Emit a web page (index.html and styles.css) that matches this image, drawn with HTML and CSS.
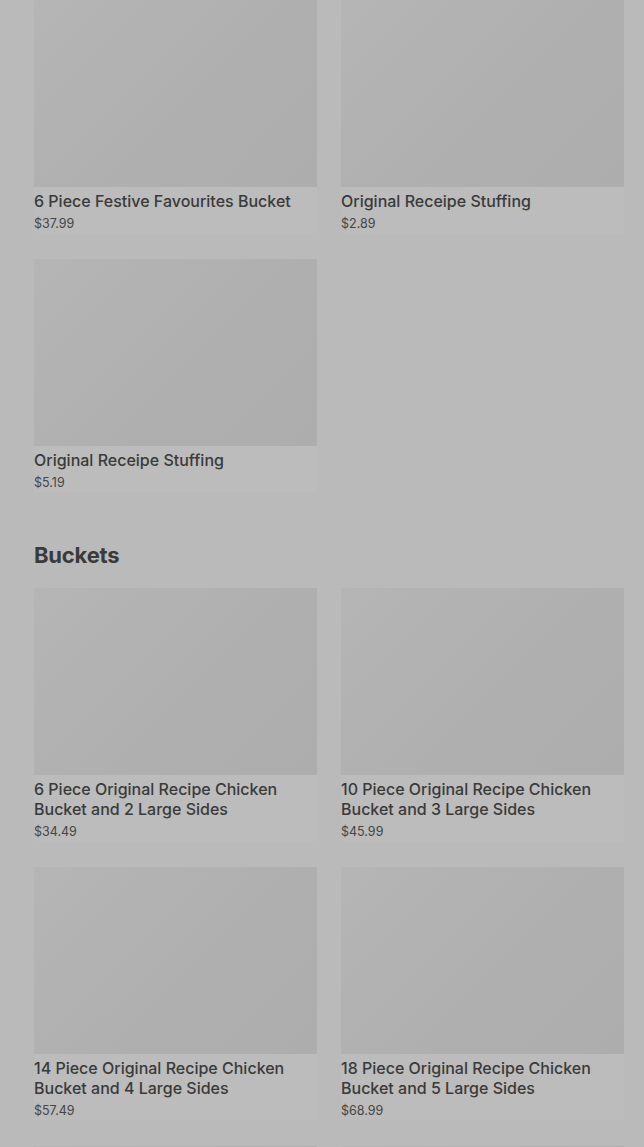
FILE: index.html
```html
<!DOCTYPE html>
<html lang="en">
  <head>
    <meta charset="UTF-8" />
    <meta name="viewport" content="width=device-width, initial-scale=1.0" />
    <title>Menu</title>
    <link rel="stylesheet" href="styles.css">
  </head>
  <body>
    <div class="menu">
      <section class="section">
        <div class="grid">
          <div class="card">
            <div class="thumb"></div>
            <h3>6 Piece Festive Favourites Bucket</h3>
            <p class="price">$37.99</p>
          </div>
          <div class="card">
            <div class="thumb"></div>
            <h3>Original Receipe Stuffing</h3>
            <p class="price">$2.89</p>
          </div>
          <div class="card">
            <div class="thumb"></div>
            <h3>Original Receipe Stuffing</h3>
            <p class="price">$5.19</p>
          </div>
        </div>
      </section>

      <section class="section">
        <h2>Buckets</h2>
        <div class="grid">
          <div class="card">
            <div class="thumb"></div>
            <h3>6 Piece Original Recipe Chicken Bucket and 2 Large Sides</h3>
            <p class="price">$34.49</p>
          </div>
          <div class="card">
            <div class="thumb"></div>
            <h3>10 Piece Original Recipe Chicken Bucket and 3 Large Sides</h3>
            <p class="price">$45.99</p>
          </div>
          <div class="card">
            <div class="thumb"></div>
            <h3>14 Piece Original Recipe Chicken Bucket and 4 Large Sides</h3>
            <p class="price">$57.49</p>
          </div>
          <div class="card">
            <div class="thumb"></div>
            <h3>18 Piece Original Recipe Chicken Bucket and 5 Large Sides</h3>
            <p class="price">$68.99</p>
          </div>
          <div class="card">
            <div class="thumb"></div>
          </div>
          <div class="card">
            <div class="thumb"></div>
          </div>
        </div>
      </section>
    </div>
  </body>
</html>
```
FILE: styles.css
```css
body {
  margin: 0;
  background-color: #bababa;
  font-family: Inter, "Noto Sans", sans-serif;
  color: #3a3a3a;
  overflow: hidden;
}
.menu {
  padding: 0 20px 0 34px;
}
.grid {
  display: grid;
  grid-template-columns: 1fr 1fr;
  column-gap: 24px;
}
.card {
  margin-bottom: 26px;
  background-color: #bcbcbc;
}
.thumb {
  height: 187px;
  background: linear-gradient(135deg, #b5b5b5, #afafaf 60%, #adadad);
}
h2 {
  font-size: 22px;
  line-height: 30px;
  font-weight: 700;
  margin: 22px 0 18px;
  letter-spacing: -0.2px;
}
h3 {
  font-size: 16px;
  line-height: 20px;
  font-weight: 500;
  margin: 4px 0 0;
}
.price {
  font-size: 12.5px;
  line-height: 18px;
  margin: 4px 0 0;
  color: #454545;
}
```
